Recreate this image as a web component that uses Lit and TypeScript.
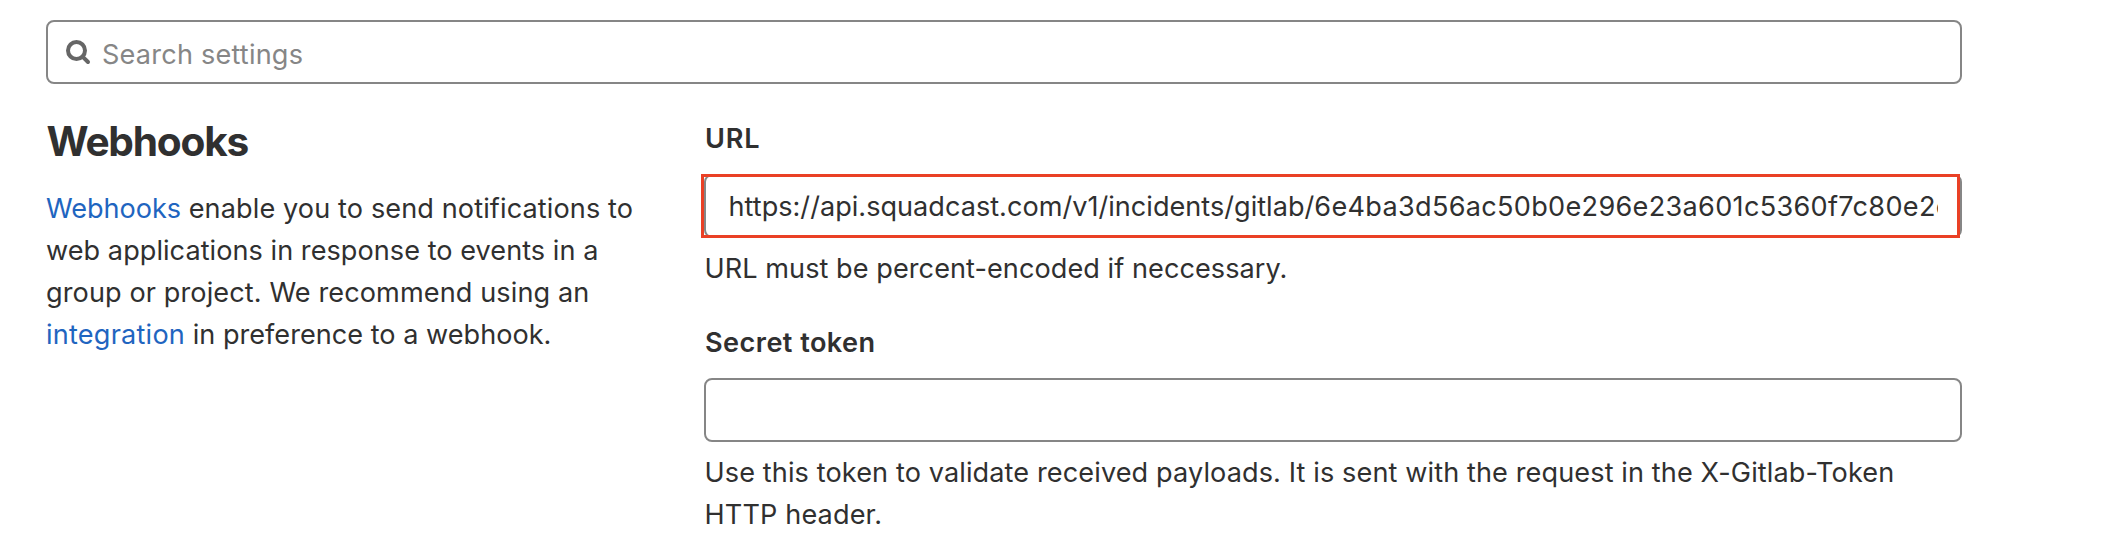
import { LitElement, html, css } from "lit";
import { customElement, property } from "lit/decorators.js";

@customElement("settings-search")
class SettingsSearch extends LitElement {
  static styles = css`
    :host { display: block; }
    .box {
      box-sizing: border-box;
      display: flex;
      align-items: center;
      height: 64px;
      border: 2px solid #868686;
      border-radius: 8px;
      padding-left: 14px;
      background: #fff;
    }
    .icon { width: 32px; height: 32px; flex: none; fill: none; stroke: #666; }
    .field {
      flex: 1;
      border: 0;
      outline: 0;
      margin-left: 8px;
      padding: 6px 0 0;
      background: transparent;
      font: inherit;
      line-height: 40px;
      letter-spacing: 0.2px;
      color: #303030;
    }
    .field::placeholder { color: #868686; opacity: 1; }
  `;
  render() {
    return html`<div class="box">
      <svg class="icon" viewBox="0 0 16 16">
        <circle cx="7.25" cy="7.25" r="4.25" stroke-width="2" />
        <path d="M10.4 10.4 L13 13" stroke-width="2" stroke-linecap="round" />
      </svg>
      <input class="field" type="text" placeholder="Search settings" />
    </div>`;
  }
}

@customElement("form-field")
class FormField extends LitElement {
  @property() label = "";
  static styles = css`
    :host { display: block; }
    .label { display: block; line-height: 42px; font-weight: 620; margin-bottom: 14px; padding-left: 1px; letter-spacing: var(--label-tracking, 0.45px); }
    .control { height: 64px; margin-bottom: 10px; }
    .help { line-height: 42px; white-space: nowrap; padding-left: 0.5px; }
  `;
  render() {
    return html`<label class="label">${this.label}</label>
      <div class="control"><slot name="control"></slot></div>
      <div class="help"><slot></slot></div>`;
  }
}

@customElement("app-root")
class AppRoot extends LitElement {
  static styles = css`
    :host {
      display: block;
      box-sizing: border-box;
      width: 2124px;
      height: 558px;
      overflow: hidden;
      padding: 20px 162px 0 46px;
      background: #fff;
      color: #303030;
      font: 400 27.1px/42px Inter, "Liberation Sans", sans-serif;
    }
    .columns { display: grid; grid-template-columns: 658px minmax(0, 1fr); margin-top: 34px; }
    .title {
      margin: 3px 0 25px;
      font-size: 40.6px;
      line-height: 42px;
      font-weight: 660;
      letter-spacing: -1.2px;
      padding-left: 0.5px;
    }
    .intro { margin: 0; white-space: nowrap; }
    .link { color: #1f65c0; text-decoration: none; }
    .fields { display: grid; gap: 32px; align-content: start; grid-template-columns: minmax(0, 1fr); }
    .first { --label-tracking: 0.8px; }
    .input {
      box-sizing: border-box;
      width: 100%;
      height: 64px;
      border: 2px solid #868686;
      border-radius: 8px;
      background: #fff;
      padding: 0 22px;
      display: block;
      font: inherit;
      outline: 0;
    }
    .wrap { position: relative; }
    .value { overflow: hidden; white-space: nowrap; line-height: 62px; height: 60px; padding-left: 0.5px; }
    .highlight { position: absolute; inset: 0 2px 0 -3px; border: 3px solid #ea4025; }
    .t1 { letter-spacing: 0.013px; }
    .t2 { letter-spacing: 0.3px; }
    .s0 { letter-spacing: -0.04px; }
    .s1 { letter-spacing: 0.11px; }
    .s2 { letter-spacing: 0.045px; }
    .s3 { letter-spacing: 0.1px; }
    .s4 { letter-spacing: 0.22px; }
    .s5 { letter-spacing: 0.013px; }
    .s6 { letter-spacing: 0.06px; }
    .s7 { letter-spacing: 0.14px; }
  `;
  render() {
    return html`
      <settings-search></settings-search>
      <div class="columns">
        <section>
          <h4 class="title">Webhooks</h4>
          <p class="intro">
            <a class="link s0">Webhooks</a> <span class="s1">enable you to send notifications to</span><br />
            <span class="s2">web applications in response to events in a</span><br />
            <span class="s3">group or project. We recommend using an</span><br />
            <a class="link s4">integration</a> <span class="s5">in preference to a webhook.</span>
          </p>
        </section>
        <section class="fields">
          <form-field class="first" label="URL">
            <div class="wrap" slot="control">
              <div class="input"><div class="value"><span class="t1">https://api.squadcast.com/v1/incidents/gitlab/</span><span class="t2">6e4ba3d56ac50b0e296e23a601c5360f7c80e2c</span></div></div>
              <div class="highlight"></div>
            </div>
            <span class="s6">URL must be percent-encoded if neccessary.</span>
          </form-field>
          <form-field label="Secret token">
            <input class="input" slot="control" type="text" />
            <span class="s1">Use this token to validate received payloads. It is sent with the request in the X-Gitlab-Token</span><br />
            <span class="s7">HTTP header.</span>
          </form-field>
        </section>
      </div>
    `;
  }
}
